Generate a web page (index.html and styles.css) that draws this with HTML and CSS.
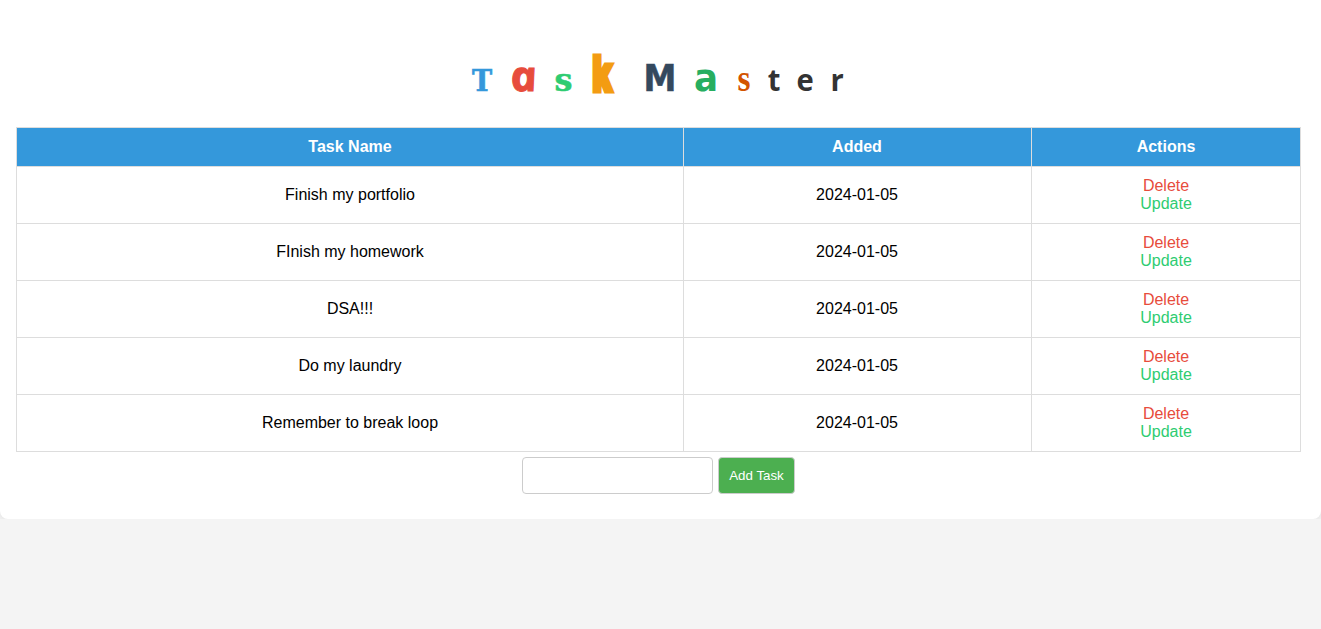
FILE: index.html
```html
<!DOCTYPE html>
<html lang="en">
<head>
<meta charset="utf-8">
<title>Task Master</title>
<link rel="stylesheet" href="styles.css">
</head>
<body>
<main class="content">
<h1 class="title"><span class="l1">T</span><span class="l2">a</span><span class="l3">s</span><span class="l4">k</span><span class="l5">M</span><span class="l6">a</span><span class="l7">s</span><span class="l8">t</span><span class="l9">e</span><span class="l10">r</span></h1>
<table class="tasks">
<colgroup><col class="col-name"><col class="col-added"><col class="col-actions"></colgroup>
<tr><th>Task Name</th><th>Added</th><th>Actions</th></tr>
<tr><td>Finish my portfolio</td><td>2024-01-05</td><td><a class="delete">Delete</a><br><a class="update">Update</a></td></tr>
<tr><td>FInish my homework</td><td>2024-01-05</td><td><a class="delete">Delete</a><br><a class="update">Update</a></td></tr>
<tr><td>DSA!!!</td><td>2024-01-05</td><td><a class="delete">Delete</a><br><a class="update">Update</a></td></tr>
<tr><td>Do my laundry</td><td>2024-01-05</td><td><a class="delete">Delete</a><br><a class="update">Update</a></td></tr>
<tr><td>Remember to break loop</td><td>2024-01-05</td><td><a class="delete">Delete</a><br><a class="update">Update</a></td></tr>
</table>
<form class="add-form">
<input class="field" type="text" name="content" aria-label="Task">
<button class="add" type="button">Add Task</button>
</form>
</main>
</body>
</html>
```

FILE: styles.css
```css
* { box-sizing: border-box; }
body { margin: 0; background: #f4f4f4; font-family: "Liberation Sans", Arial, sans-serif; font-size: 16px; overflow: hidden; }
.content { height: 519px; padding: 43px 20px 0 16px; background: #fff; border-radius: 0 0 8px 8px; box-shadow: 0 0 10px rgba(0,0,0,.1); }
.title { display: flex; align-items: baseline; height: 84px; margin: 0; padding-left: 453.7px; color: #333; font-size: 32px; line-height: 60px; }
.title span { display: flex; justify-content: center; width: 24px; flex: none; }
.title .l1 { font-family: "DejaVu Serif", serif; font-size: 30px; color: #3498db; transform: scaleX(.9); -webkit-text-stroke: .7px #3498db; }
.title .l2 { margin-left: 17.8px; font-family: "Open Sans", sans-serif; font-style: italic; font-size: 42px; color: #e74c3c; transform: skewX(10deg) scaleX(1.06); -webkit-text-stroke: 1px #e74c3c; }
.title .l3 { margin-left: 16px; font-family: "DejaVu Serif", serif; font-size: 32px; color: #2ecc71; -webkit-text-stroke: .5px #2ecc71; }
.title .l4 { margin-left: 14.5px; font-family: "Open Sans", sans-serif; font-weight: 800; font-size: 46px; color: #f39c12; transform: scaleX(.65); -webkit-text-stroke: 5px #f39c12; }
.title .l5 { margin-left: 33.7px; font-family: "DejaVu Sans", sans-serif; font-size: 38px; color: #34495e; transform: scaleX(.87); -webkit-text-stroke: .6px #34495e; }
.title .l6 { margin-left: 22.8px; font-family: "DejaVu Sans", sans-serif; font-size: 38px; color: #27ae60; transform: scaleX(.94); }
.title .l7 { margin-left: 13.2px; font-family: "Liberation Serif", serif; font-size: 37px; color: #d35400; transform: scaleX(.9); }
.title .l8 { margin-left: 6.3px; }
.title .l9 { margin-left: 7px; }
.title .l10 { margin-left: 8.5px; }
.title .l8, .title .l9, .title .l10 { font-family: "Open Sans", sans-serif; font-size: 31px; transform: scaleX(.94); }
.tasks { width: 1285px; table-layout: fixed; border-collapse: collapse; text-align: center; line-height: 18px; }
.col-name { width: 667px; }
.col-added { width: 348px; }
.col-actions { width: 269px; }
.tasks th, .tasks td { border: 1px solid #ddd; padding: 10px; }
.tasks td:nth-child(2), .tasks th:nth-child(2) { padding-right: 11px; }
.tasks th { height: 39px; background: #3498db; color: #fff; }
.tasks td { height: 57px; color: #000; }
.delete { color: #e74c3c; }
.update { color: #2ecc71; }
.add-form { display: flex; justify-content: center; gap: 5px; padding-top: 5px; }
.field, .add { height: 37px; margin: 0; border: 1px solid #ccc; border-radius: 4px; font: 13.333px/16px "Liberation Sans", Arial, sans-serif; }
.field { width: 191px; padding: 10px; background: #fff; }
.add { width: 77px; padding: 0; background: #4caf50; color: #fff; }
```
